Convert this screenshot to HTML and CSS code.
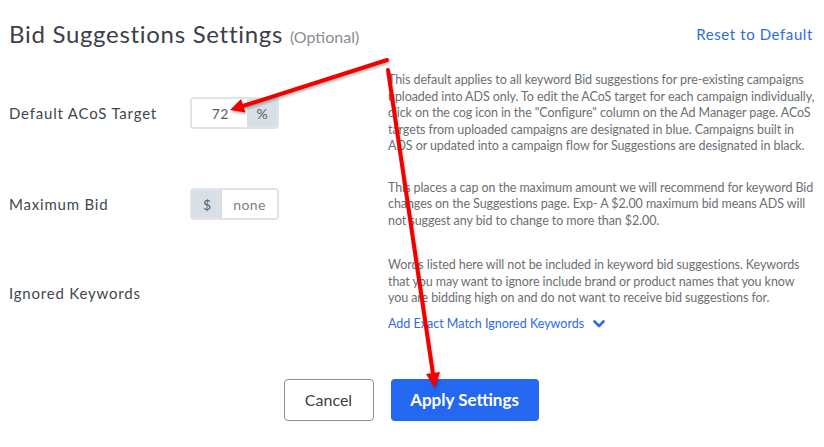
FILE: index.html
```html
<!DOCTYPE html>
<html>
<head>
<meta charset="utf-8">
<link rel="stylesheet" href="styles.css">
</head>
<body>
<div class="page">
  <header class="head">
    <h1 class="title">Bid Suggestions Settings <span class="optional">(Optional)</span></h1>
    <a class="reset">Reset to Default</a>
  </header>
  <div class="settings">
    <div class="label">Default ACoS Target</div>
    <div class="control">
      <div class="group">
        <div class="field right">72</div>
        <div class="addon">%</div>
      </div>
    </div>
    <p class="desc">This default applies to all keyword Bid suggestions for pre-existing campaigns<br>uploaded into ADS only. To edit the ACoS target for each campaign individually,<br>click on the cog icon in the "Configure" column on the Ad Manager page. ACoS<br>targets from uploaded campaigns are designated in blue. Campaigns built in<br>ADS or updated into a campaign flow for Suggestions are designated in black.</p>

    <div class="label">Maximum Bid</div>
    <div class="control">
      <div class="group">
        <div class="addon">$</div>
        <div class="field center">none</div>
      </div>
    </div>
    <p class="desc">This places a cap on the maximum amount we will recommend for keyword Bid<br>changes on the Suggestions page. Exp- A $2.00 maximum bid means ADS will<br>not suggest any bid to change to more than $2.00.</p>

    <div class="label">Ignored Keywords</div>
    <div class="control"></div>
    <div class="desc-block">
      <p class="desc">Words listed here will not be included in keyword bid suggestions. Keywords<br>that you may want to ignore include brand or product names that you know<br>you are bidding high on and do not want to receive bid suggestions for.</p>
      <a class="add-link">Add Exact Match Ignored Keywords <svg class="chev" width="12" height="8" viewBox="0 0 12 8"><path d="M1.5 1.5 L6 6 L10.5 1.5" fill="none" stroke="#2e6be6" stroke-width="2.6" stroke-linecap="round" stroke-linejoin="round"/></svg></a>
    </div>
  </div>
  <div class="actions">
    <button class="btn btn-cancel">Cancel</button>
    <button class="btn btn-apply">Apply Settings</button>
  </div>
</div>
<svg class="arrows" width="824" height="447" viewBox="0 0 824 447">
  <line x1="387" y1="60" x2="243" y2="106" stroke="#f20000" stroke-width="4" stroke-linecap="round"/>
  <polygon points="230,110 245.5,112.5 241,99" fill="#f20000"/>
  <line x1="388" y1="70" x2="433" y2="374" stroke="#f20000" stroke-width="4" stroke-linecap="round"/>
  <polygon points="435,388 440,372 426,374" fill="#f20000"/>
</svg>
</body>
</html>
```
FILE: styles.css
```css
* { box-sizing: border-box; }
body {
  margin: 0;
  background: #fff;
  font-family: "Lato", "Noto Sans", sans-serif;
  width: 824px;
  height: 447px;
  overflow: hidden;
  position: relative;
}
.page {
  padding: 0 11px 0 9px;
}
.head {
  display: flex;
  justify-content: space-between;
  align-items: center;
  height: 72px;
  padding-bottom: 5px;
}
.title {
  margin: 0;
  font-weight: 400;
  font-size: 24px;
  color: #3b4049;
  letter-spacing: 0.7px;
}
.optional {
  font-size: 16px;
  color: #8a8d92;
  letter-spacing: 0;
}
.reset {
  font-size: 15px;
  color: #2e6be6;
  letter-spacing: 0.6px;
}
.settings {
  display: grid;
  grid-template-columns: 181px 198px 1fr;
  align-items: center;
  row-gap: 25px;
}
.label {
  font-size: 15px;
  color: #43474d;
  letter-spacing: 0.8px;
}
.group {
  display: flex;
  width: 89px;
  height: 32px;
  border: 2px solid #dfe4ea;
  border-radius: 4px;
  overflow: hidden;
  font-size: 14px;
  color: #5a5e63;
}
.field {
  flex: 1;
  background: #fff;
  display: flex;
  align-items: center;
}
.field.right { justify-content: flex-end; padding-right: 18px; letter-spacing: 0.5px; }
.field.center { justify-content: center; color: #7b7f84; letter-spacing: 0.4px; }
.addon {
  width: 30px;
  background: #d9dfe7;
  display: flex;
  align-items: center;
  justify-content: center;
  color: #5a5e63;
}
.desc-block {
  padding-top: 3px;
}
.desc {
  margin: 0;
  font-size: 12.5px;
  line-height: 16.5px;
  color: #6c6f73;
  white-space: nowrap;
  letter-spacing: -0.08px;
}
.add-link {
  display: inline-flex;
  align-items: center;
  gap: 9px;
  margin-top: 9px;
  font-size: 12.5px;
  line-height: 16px;
  color: #2e6be6;
}
.actions {
  display: flex;
  justify-content: center;
  gap: 17px;
  margin-top: 47px;
}
.btn {
  font-family: "Lato", "Noto Sans", sans-serif;
  height: 42px;
  border-radius: 4px;
  font-size: 16px;
}
.btn-cancel {
  width: 90px;
  background: #fff;
  border: 1px solid #8e9297;
  color: #3b3f45;
}
.btn-apply {
  width: 148px;
  background: #2468f2;
  border: none;
  color: #fff;
  font-weight: 700;
  font-size: 17px;
}
.arrows {
  position: absolute;
  left: 0;
  top: 0;
  pointer-events: none;
  filter: drop-shadow(1px 2px 1px rgba(0,0,0,0.25));
}
```
